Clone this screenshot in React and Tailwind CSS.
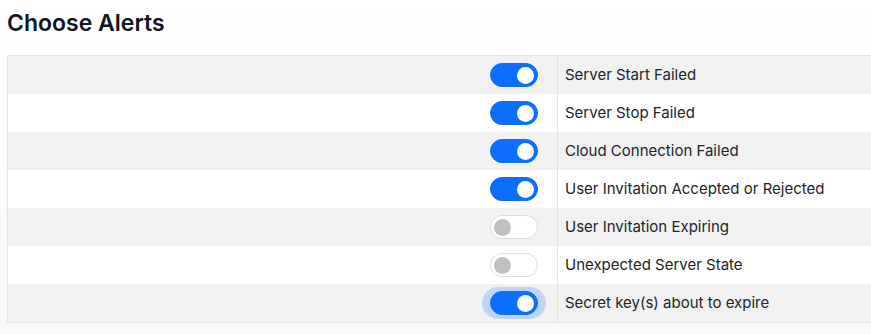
const alerts = [
  { label: "Server Start Failed", on: true },
  { label: "Server Stop Failed", on: true },
  { label: "Cloud Connection Failed", on: true },
  { label: "User Invitation Accepted or Rejected", on: true },
  { label: "User Invitation Expiring", on: false },
  { label: "Unexpected Server State", on: false },
  { label: "Secret key(s) about to expire", on: true, focus: true },
];

function Toggle({ on, focus }) {
  return (
    <span
      className={
        "flex px-[8px] py-[4px] rounded-full " +
        (focus ? "bg-[#bed5f8]" : "bg-transparent")
      }
    >
      <span
        className={
          "flex items-center w-[48px] h-[24px] rounded-full border px-[3px] " +
          (on
            ? "bg-[#0d6efd] border-[#0d6efd] justify-end"
            : "bg-white border-[#d9dde3] justify-start")
        }
      >
        <span
          className={
            "w-[17px] h-[17px] rounded-full " + (on ? "bg-white" : "bg-[#bfbfbf]")
          }
        />
      </span>
    </span>
  );
}

export default function App() {
  return (
    <div
      className="min-h-[334px] bg-gradient-to-b from-white to-[#f8f8f8] pl-[7px] pt-[9px]"
      style={{ fontFamily: "Inter, 'Liberation Sans', sans-serif" }}
    >
      <h1 className="text-[23px] leading-[28px] font-semibold text-[#0f1420] mb-[18px]">
        Choose Alerts
      </h1>
      <div className="border border-[#e3e3e3] w-[900px]">
        {alerts.map((a, i) => (
          <div
            key={a.label}
            className={
              "flex h-[38px] " + (i % 2 === 0 ? "bg-[#f1f1f1]" : "bg-white")
            }
          >
            <div className="w-[550px] flex items-center justify-end pr-[11px] border-r border-[#e3e3e3]">
              <Toggle on={a.on} focus={a.focus} />
            </div>
            <div className="flex items-center pl-[7px] text-[15px] text-[#212529]">
              {a.label}
            </div>
          </div>
        ))}
      </div>
    </div>
  );
}
